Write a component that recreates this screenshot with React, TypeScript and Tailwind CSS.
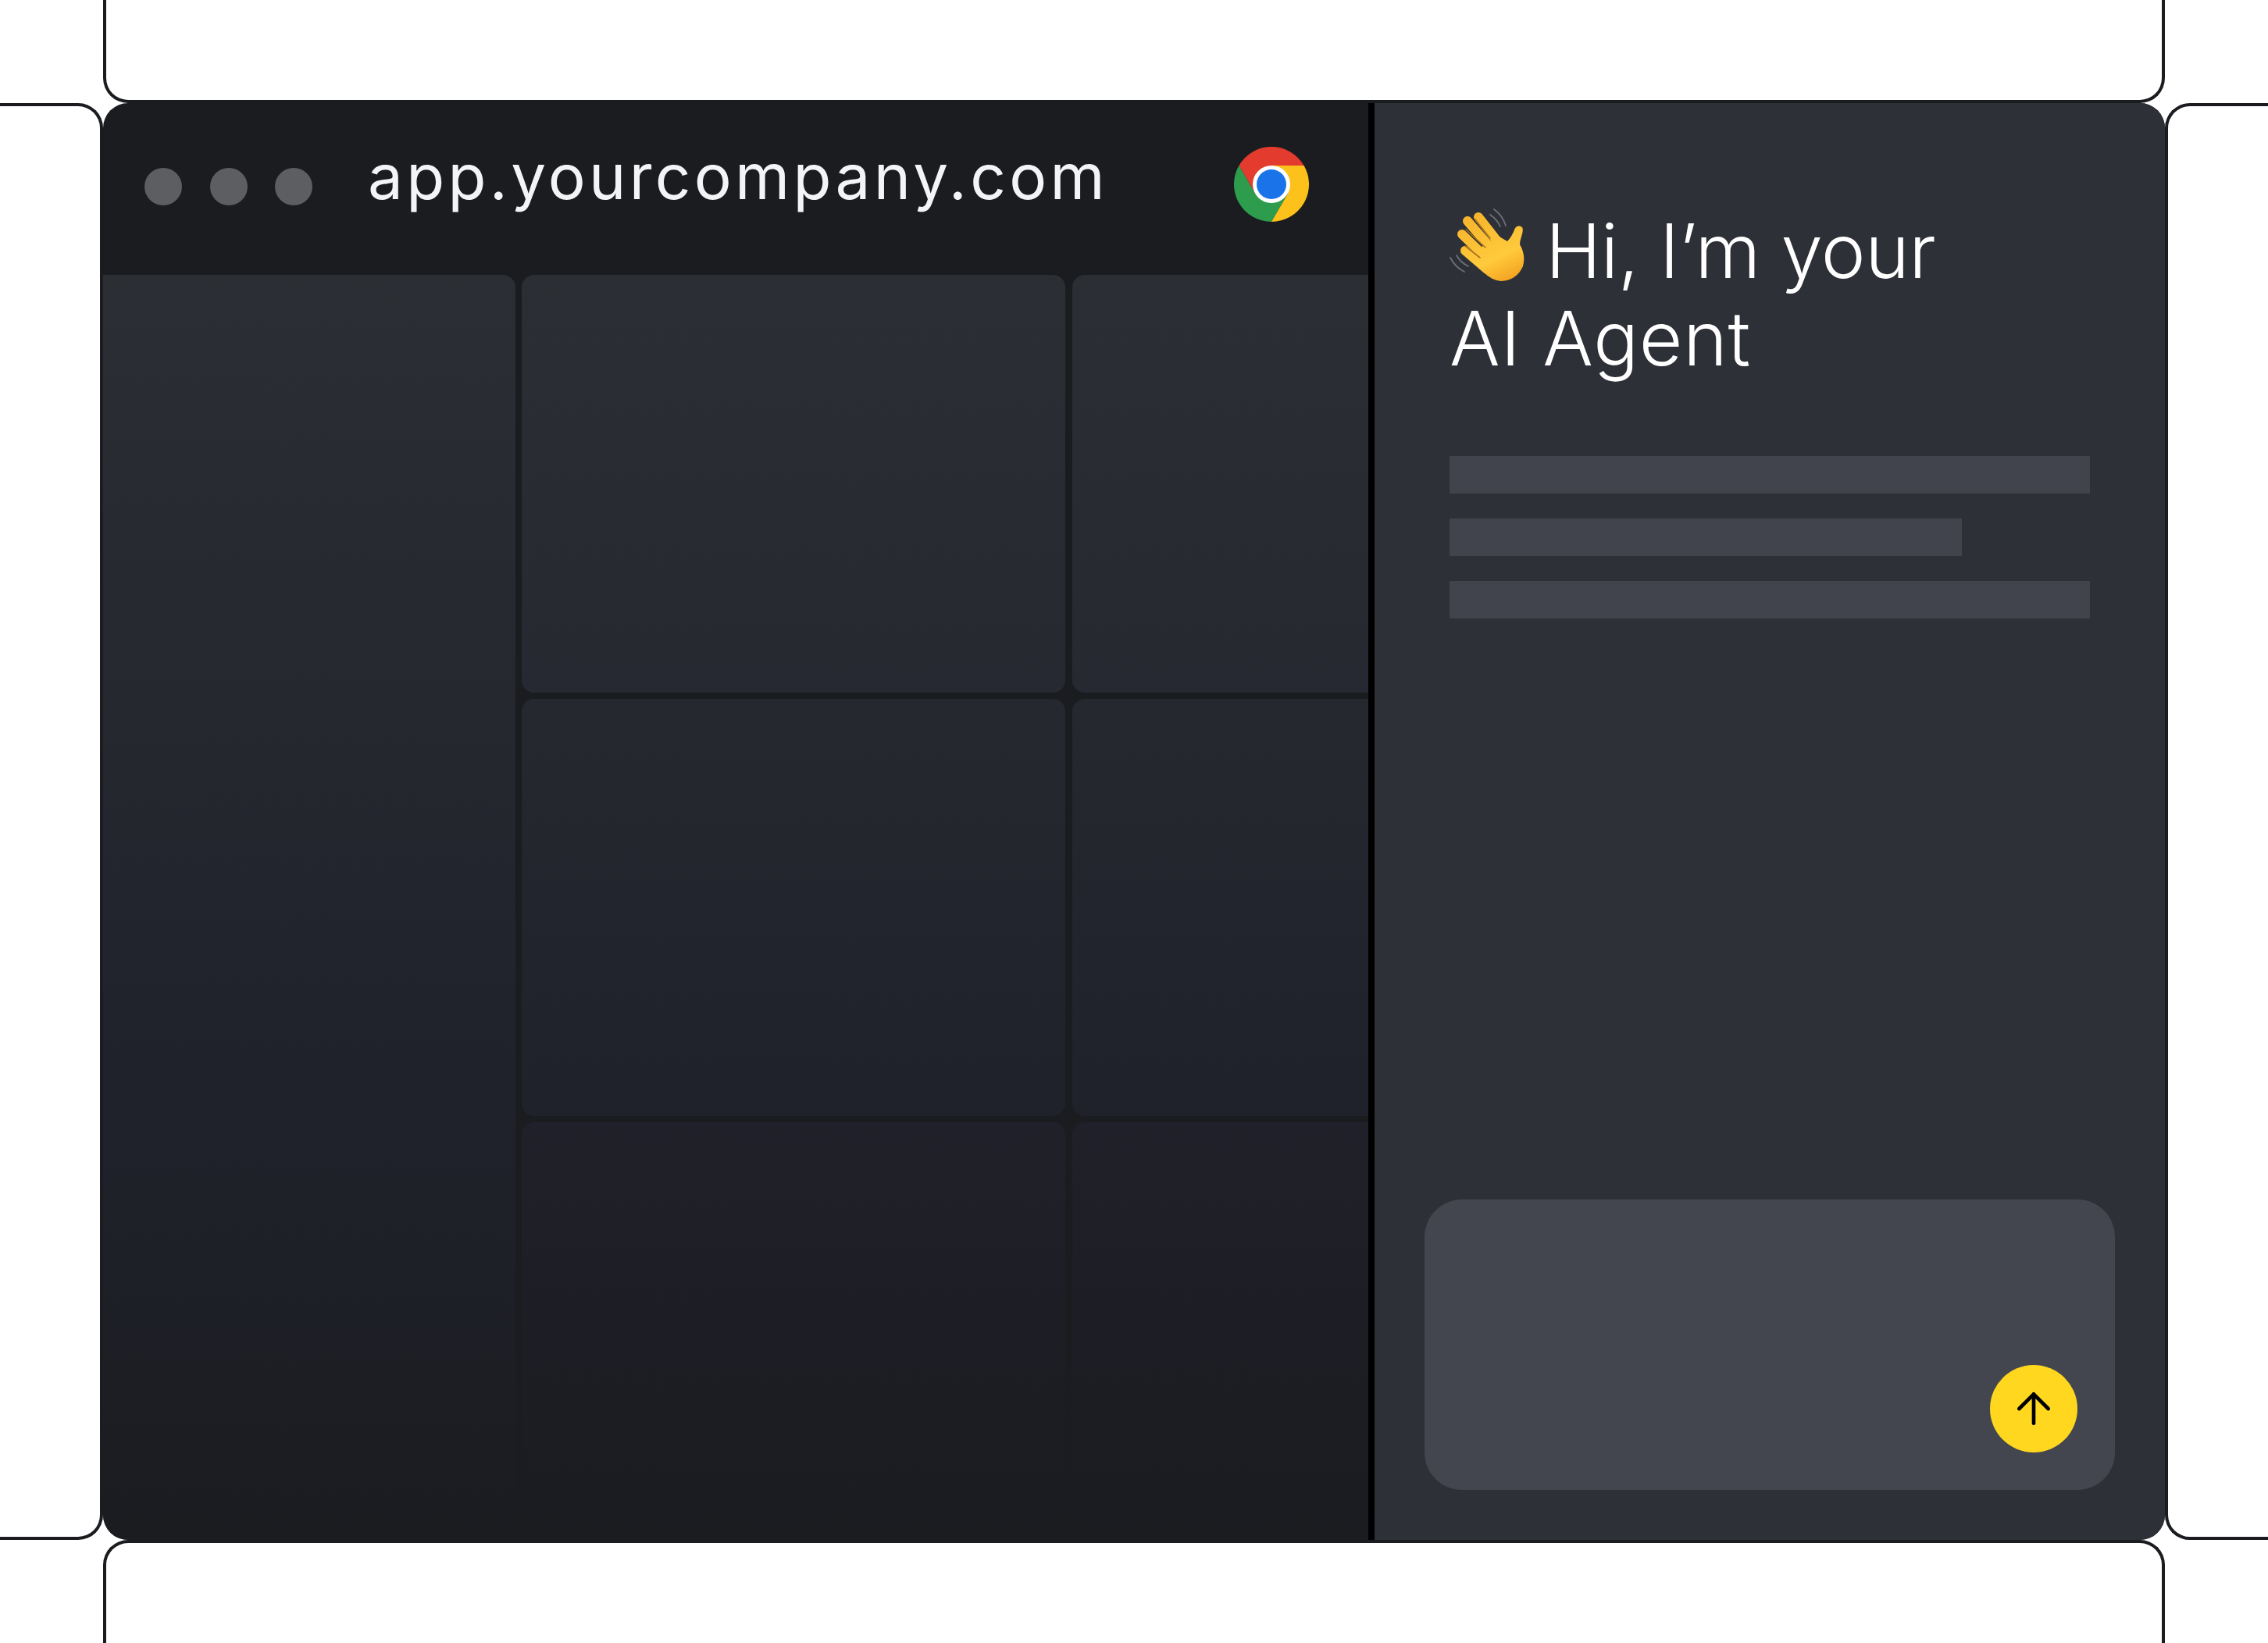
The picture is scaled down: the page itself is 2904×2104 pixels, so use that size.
import { ArrowUp } from "lucide-react"

function ChromeLogo() {
  return (
    <svg viewBox="0 0 96 96" className="w-24 h-24 shrink-0 mt-14 ml-auto mr-[76px]">
      <path d="M89.6 24A48 48 0 0 0 6.4 24L27.2 60L48 24Z" fill="#e33b2e" />
      <path d="M6.4 24A48 48 0 0 0 48 96L69 60L27.2 60Z" fill="#2d9c4d" />
      <path d="M48 96A48 48 0 0 0 89.6 24L48 24L69 60Z" fill="#fcc11a" />
      <circle cx="48" cy="48" r="24" fill="#ffffff" />
      <circle cx="48" cy="48" r="19" fill="#1a73e8" />
    </svg>
  )
}

function WaveEmoji() {
  return (
    <svg viewBox="0 0 96 96" className="inline-block w-24 h-24 align-[-7px]">
      <defs>
        <linearGradient id="hand" gradientUnits="userSpaceOnUse" x1="30" y1="10" x2="70" y2="95">
          <stop offset="0" stopColor="#f6b52d" />
          <stop offset="0.65" stopColor="#ffca3c" />
          <stop offset="1" stopColor="#f4a322" />
        </linearGradient>
      </defs>
      <g fill="none" stroke="#6d7076" strokeWidth="1.8" strokeLinecap="round">
        <path d="M57 1Q68 9 72 22" />
        <path d="M52 8Q61 14 65 23" />
        <path d="M1 63Q7 75 19 81" />
        <path d="M9 60Q14 69 24 74" />
      </g>
      <g stroke="url(#hand)" strokeWidth="12" strokeLinecap="round" fill="none">
        <path d="M37 11L66 48" />
        <path d="M23 16L54 52" />
        <path d="M16 33L46 62" />
        <path d="M20 54L48 78" />
      </g>
      <path
        d="M62 35L74 42Q80 36 84 25Q88 20 93 24Q95 28 92 36Q90 42 90 46Q98 60 94 74Q86 92 66 93Q54 92 44 82L22 62Z"
        fill="url(#hand)"
      />
      <g fill="none" stroke="#a8701a" strokeWidth="1.6" strokeLinecap="round">
        <path d="M32 13L52 38" />
        <path d="M21 27L46 50" />
        <path d="M20 48L39 63" />
      </g>
    </svg>
  )
}

export default function App() {
  return (
    <div className="grid grid-cols-[132px_2640px_132px] grid-rows-[132px_1840px_132px] w-[2904px] h-[2104px] bg-white font-['Inter',sans-serif]">
      <div />
      <div className="border-x-4 border-b-4 border-[#1b1c20] rounded-b-[32px]" />
      <div />

      <div className="border-y-4 border-r-4 border-[#1b1c20] rounded-r-[32px]" />

      <div className="flex rounded-[32px] overflow-hidden bg-[#1b1c20]">
        <div className="w-[1620px] flex flex-col overflow-hidden">
          <div className="flex items-start h-[220px] shrink-0 pl-[53px]">
            <div className="flex gap-[35.5px] mt-[83px]">
              <div className="w-12 h-12 rounded-full bg-[#5d5e62]" />
              <div className="w-12 h-12 rounded-full bg-[#5d5e62]" />
              <div className="w-12 h-12 rounded-full bg-[#5d5e62]" />
            </div>
            <div className="ml-[71px] mt-[46px] text-[80px] leading-[96px] tracking-[4.3px] text-[#f3f4f5]">
              app.yourcompany.com
            </div>
            <ChromeLogo />
          </div>
          <div className="grid flex-1 grid-cols-[528px_696px_420px] grid-rows-3 gap-2">
            <div className="row-span-3 rounded-r-2xl bg-gradient-to-b from-[#2b2e33] via-[#1f222b] via-65% to-[#1b1c20]" />
            <div className="rounded-2xl bg-gradient-to-b from-[#2b2e33] to-[#262931]" />
            <div className="ml-px rounded-l-2xl bg-gradient-to-b from-[#2b2e33] to-[#262931]" />
            <div className="rounded-2xl bg-gradient-to-b from-[#25282f] to-[#1f222b]" />
            <div className="ml-px rounded-l-2xl bg-gradient-to-b from-[#25282f] to-[#1f222b]" />
            <div className="rounded-t-2xl bg-gradient-to-b from-[#1f2029] to-[#1b1c20]" />
            <div className="ml-px rounded-tl-2xl bg-gradient-to-b from-[#1f2029] to-[#1b1c20]" />
          </div>
        </div>

        <div className="w-[1020px] flex flex-col border-l-8 border-black bg-[#2e3038] px-16 pb-16">
          <h1 className="pt-[133px] pl-8 text-[96px] leading-[112px] font-light text-white">
            <WaveEmoji /> <span className="tracking-[-0.4px]">Hi, I’m your</span>
            <br />
            <span className="tracking-[0.8px]">AI Agent</span>
          </h1>
          <div className="flex flex-col gap-8 mt-[95px] px-8">
            <div className="h-12 bg-[#42444d]" />
            <div className="h-12 w-[656px] bg-[#42444d]" />
            <div className="h-12 bg-[#42444d]" />
          </div>
          <div className="flex items-end justify-end h-[372px] mt-auto p-12 rounded-[48px] bg-[#44464f]">
            <button className="flex items-center justify-center w-28 h-28 rounded-full bg-[#ffd71f] text-black">
              <ArrowUp size={64} strokeWidth={1.75} />
            </button>
          </div>
        </div>
      </div>

      <div className="border-y-4 border-l-4 border-[#1b1c20] rounded-l-[32px]" />

      <div />
      <div className="border-x-4 border-t-4 border-[#1b1c20] rounded-t-[32px]" />
      <div />
    </div>
  )
}
